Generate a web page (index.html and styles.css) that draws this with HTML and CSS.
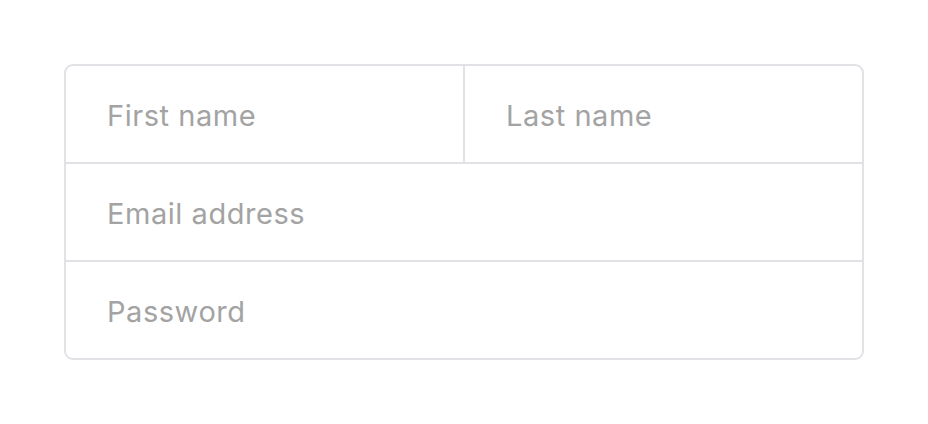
FILE: index.html
```html
<!DOCTYPE html>
<html>
<head>
<meta charset="utf-8">
<link rel="stylesheet" href="styles.css">
</head>
<body>
<form class="form">
  <div class="row split">
    <div class="field"><span class="ph">First name</span></div>
    <div class="field right"><span class="ph">Last name</span></div>
  </div>
  <div class="row"><div class="field"><span class="ph">Email address</span></div></div>
  <div class="row"><div class="field"><span class="ph">Password</span></div></div>
</form>
</body>
</html>
```
FILE: styles.css
```css
html, body { margin: 0; padding: 0; background: #fff; }
body { padding: 64px 0 0 64px; font-family: Inter, "Noto Sans", sans-serif; }
.form {
  width: 796px;
  border: 2px solid #e0e2e6;
  border-radius: 9px;
  display: flex;
  flex-direction: column;
}
.row { display: flex; height: 96px; }
.row + .row { border-top: 2px solid #e0e2e6; }
.field {
  flex: 1;
  display: flex;
  align-items: center;
  padding: 3px 0 0 41px;
}
.field.right { border-left: 2px solid #e0e2e6; }
.ph { color: #a3a3a3; font-size: 29px; letter-spacing: 0.55px; }
```
